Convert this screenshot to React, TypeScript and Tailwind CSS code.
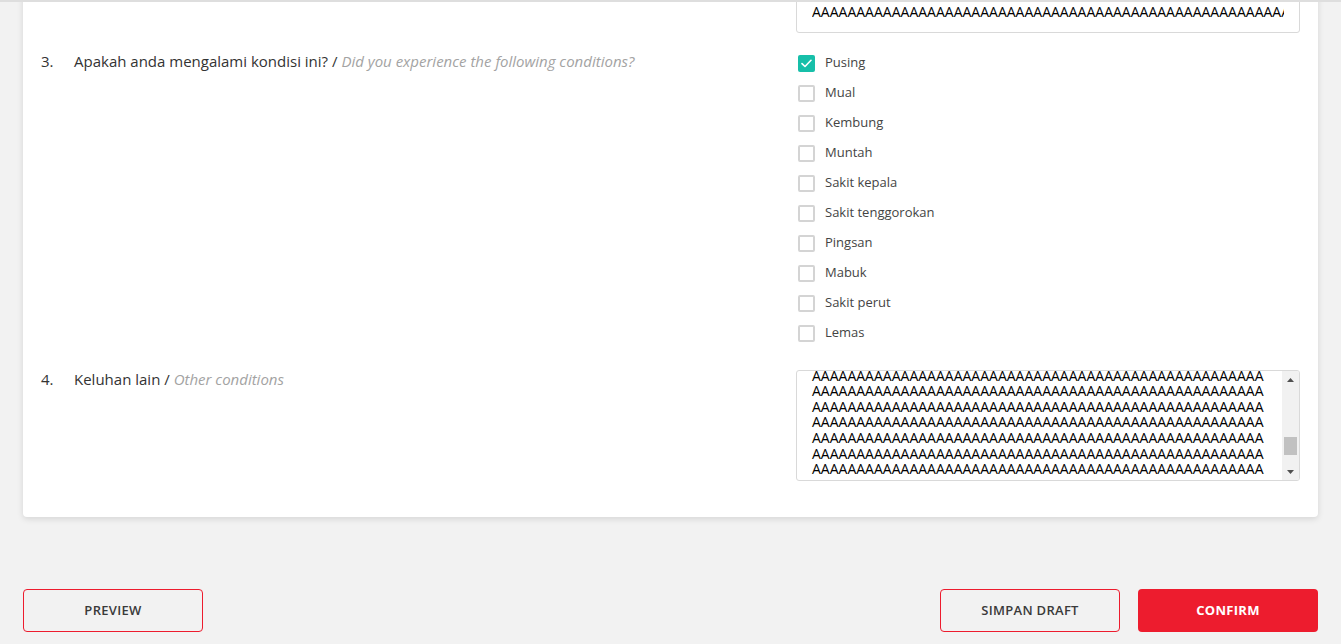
import { useEffect, useRef } from 'react';

const conditions = [
  { label: 'Pusing', checked: true },
  { label: 'Mual', checked: false },
  { label: 'Kembung', checked: false },
  { label: 'Muntah', checked: false },
  { label: 'Sakit kepala', checked: false },
  { label: 'Sakit tenggorokan', checked: false },
  { label: 'Pingsan', checked: false },
  { label: 'Mabuk', checked: false },
  { label: 'Sakit perut', checked: false },
  { label: 'Lemas', checked: false },
];

const longLine = 'A'.repeat(51);
const otherText = Array.from({ length: 14 }, () => longLine).join('\n');

function Checkbox({ label, checked }: { label: string; checked: boolean }) {
  return (
    <label className="flex h-[30px] items-center gap-[10px]">
      {checked ? (
        <span className="flex h-[17px] w-[17px] items-center justify-center rounded-[2px] bg-[#17bfa9]">
          <svg width="11" height="9" viewBox="0 0 11 9" fill="none">
            <path d="M1 4.6 4 7.5 10 1.3" stroke="white" strokeWidth="1.6" strokeLinecap="round" strokeLinejoin="round" />
          </svg>
        </span>
      ) : (
        <span className="h-[17px] w-[17px] rounded-[2px] border-2 border-[#d4d4d4] bg-white" />
      )}
      <span className="text-[13px] text-[#444]">{label}</span>
    </label>
  );
}

function QuestionLabel({ no, id, en }: { no: string; id: string; en: string }) {
  return (
    <div className="flex text-[15px] leading-[20px] text-[#333]">
      <span className="w-[33px]">{no}</span>
      <span>
        {id} / <span className="italic text-[#a3a3a3]">{en}</span>
      </span>
    </div>
  );
}

function ScrollArrow({ up }: { up?: boolean }) {
  return (
    <svg width="7" height="4" viewBox="0 0 7 4">
      <path d={up ? 'M0 4 3.5 0 7 4Z' : 'M0 0 3.5 4 7 0Z'} fill="#505050" />
    </svg>
  );
}

export default function App() {
  const areaRef = useRef<HTMLTextAreaElement>(null);

  useEffect(() => {
    if (areaRef.current) areaRef.current.scrollTop = 97;
  }, []);

  return (
    <div className="relative h-[644px] overflow-hidden bg-[#f2f2f2]" style={{ fontFamily: '"Open Sans", sans-serif' }}>
      <div className="absolute inset-x-0 top-0 z-10 h-[2px] bg-[#dedede]" />

      <div className="mx-[23px] -mt-[27px] rounded-b-[4px] bg-white pt-[20px] pr-[18px] pb-[36px] pl-[18px] shadow-[0_2px_6px_rgba(0,0,0,0.12)]">
        {/* question 2, mostly scrolled out of view */}
        <div className="flex justify-between">
          <div className="-mt-[13px]">
            <QuestionLabel no="2." id="Berapa suhu tubuh anda saat ini?" en="What is your current body temperature?" />
          </div>
          <div className="flex h-[40px] w-[504px] items-center rounded-[3px] border border-[#d9d9d9] px-[15px]">
            <div className="-mt-[3px] overflow-hidden whitespace-nowrap text-[14px] text-black">{'A'.repeat(60)}</div>
          </div>
        </div>

        {/* question 3 */}
        <div className="mt-[14px] flex justify-between">
          <div className="pt-[4px]">
            <QuestionLabel
              no="3."
              id="Apakah anda mengalami kondisi ini?"
              en="Did you experience the following conditions?"
            />
          </div>
          <div className="flex w-[504px] flex-col pt-[1px] pl-[2px]">
            {conditions.map((c) => (
              <Checkbox key={c.label} label={c.label} checked={c.checked} />
            ))}
          </div>
        </div>

        {/* question 4 */}
        <div className="mt-[22px] flex justify-between">
          <div className="-mt-[1px]">
            <QuestionLabel no="4." id="Keluhan lain" en="Other conditions" />
          </div>
          <div className="flex h-[111px] w-[504px] overflow-hidden rounded-[3px] border border-[#d9d9d9]">
            <textarea
              ref={areaRef}
              readOnly
              value={otherText}
              className="h-full flex-1 resize-none overflow-hidden px-[15px] py-0 text-[14px] leading-[15.6px] text-black outline-none"
            />
            <div className="flex w-[17px] flex-col items-center bg-[#f1f1f1]">
              <div className="flex h-[17px] items-center">
                <ScrollArrow up />
              </div>
              <div className="flex-1" />
              <div className="mb-[8px] h-[18px] w-[13px] bg-[#c1c1c1]" />
              <div className="flex h-[17px] items-center">
                <ScrollArrow />
              </div>
            </div>
          </div>
        </div>
      </div>

      <div className="mt-[72px] flex items-center justify-between px-[23px] text-[13px] font-semibold tracking-[0.3px]">
        <button className="h-[43px] w-[180px] rounded-[4px] border border-[#ed1c2e] text-[#3a3a3a]">PREVIEW</button>
        <div className="flex gap-[18px]">
          <button className="h-[43px] w-[180px] rounded-[4px] border border-[#ed1c2e] text-[#3a3a3a]">SIMPAN DRAFT</button>
          <button className="h-[43px] w-[180px] rounded-[4px] bg-[#ed1c2e] font-bold text-white">CONFIRM</button>
        </div>
      </div>
    </div>
  );
}
